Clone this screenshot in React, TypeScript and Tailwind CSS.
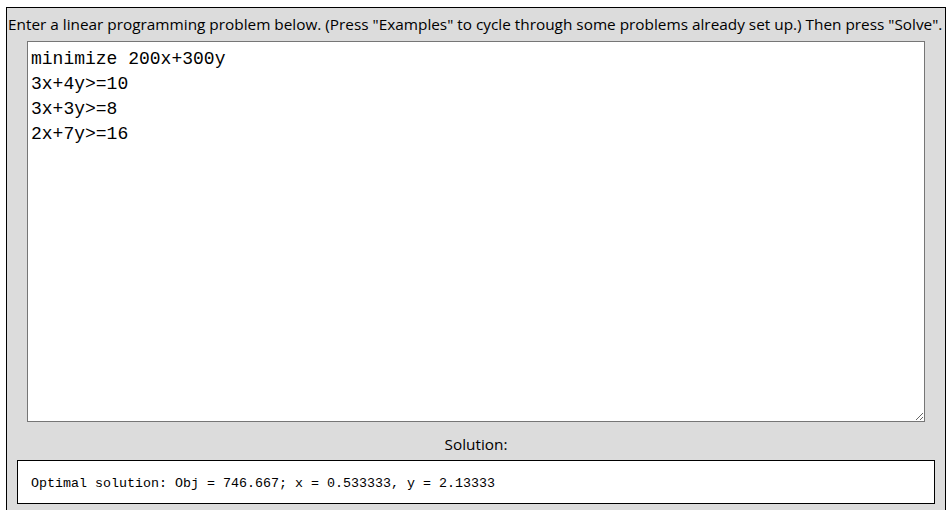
import React, { useState } from 'react';

const initialProblem = `minimize 200x+300y
3x+4y>=10
3x+3y>=8
2x+7y>=16`;

const App: React.FC = () => {
    const [problem, setProblem] = useState(initialProblem);
    const solution = 'Optimal solution: Obj = 746.667; x = 0.533333, y = 2.13333';

    return (
        <div className="bg-white h-[510px] overflow-hidden pt-[7px] pl-[6px]">
            <div className="w-[940px] h-[520px] border border-black bg-[#dcdcdc] text-black">
                {/* Instructions */}
                <p className="h-[33px] pl-[1px] text-[15.35px] leading-[33px] whitespace-nowrap font-['Open_Sans',sans-serif]">
                    Enter a linear programming problem below. (Press "Examples" to cycle through some problems already set up.) Then press "Solve".
                </p>

                {/* Problem input */}
                <textarea
                    value={problem}
                    onChange={(e) => setProblem(e.target.value)}
                    spellCheck={false}
                    className="block ml-[20px] w-[898px] h-[381px] bg-white border border-[#767676] pl-[3px] pt-[5px] text-[18px] leading-[25px] text-black font-['Liberation_Mono',monospace] outline-none"
                />

                {/* Solution label */}
                <p className="h-[38px] pt-[6px] text-center text-[15.35px] leading-[32px] font-['Open_Sans',sans-serif]">
                    Solution:
                </p>

                {/* Solution output */}
                <div className="ml-[10px] w-[918px] h-[44px] border border-black bg-white pl-[13px] pt-[3px] flex items-center">
                    <span className="text-[13.33px] text-black whitespace-pre font-['Liberation_Mono',monospace]">{solution}</span>
                </div>
            </div>
        </div>
    );
};

export default App;
